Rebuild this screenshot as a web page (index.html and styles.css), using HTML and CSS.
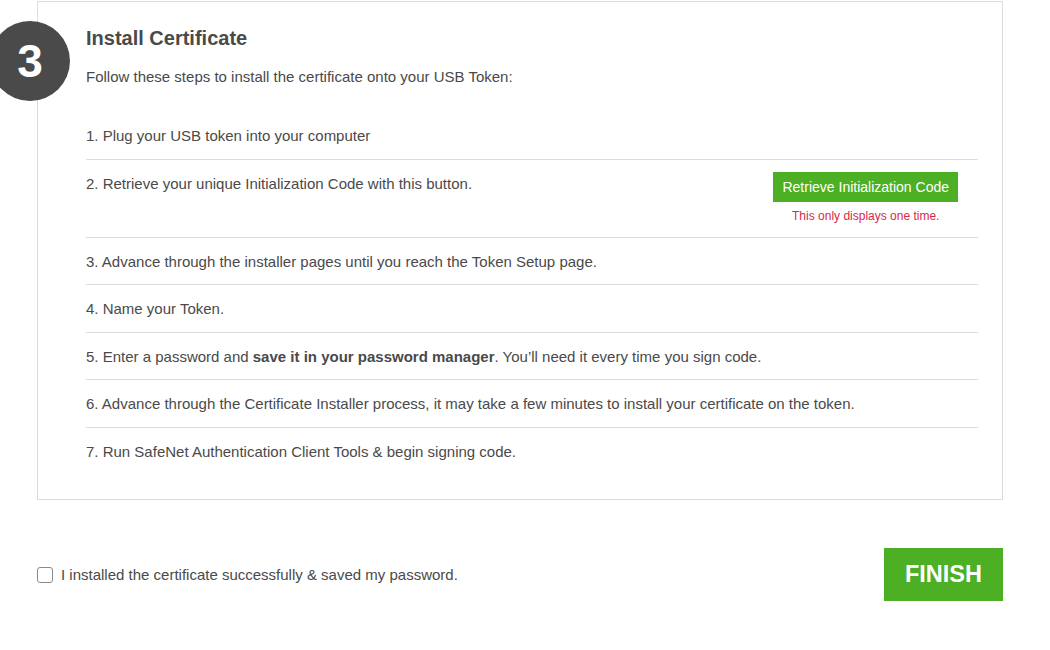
FILE: index.html
```html
<!DOCTYPE html>
<html>
<head>
<meta charset="utf-8">
<link rel="stylesheet" href="styles.css">
</head>
<body>
<div class="page">
  <section class="card">
    <div class="step-badge">3</div>
    <h2 class="title">Install Certificate</h2>
    <p class="intro">Follow these steps to install the certificate onto your USB Token:</p>
    <ul class="steps">
      <li class="step">1. Plug your USB token into your computer</li>
      <li class="step step-action">
        <span>2. Retrieve your unique Initialization Code with this button.</span>
        <div class="action">
          <button class="btn-retrieve">Retrieve Initialization Code</button>
          <span class="note">This only displays one time.</span>
        </div>
      </li>
      <li class="step">3. Advance through the installer pages until you reach the Token Setup page.</li>
      <li class="step">4. Name your Token.</li>
      <li class="step">5. Enter a password and <strong>save it in your password manager</strong>. You’ll need it every time you sign code.</li>
      <li class="step">6. Advance through the Certificate Installer process, it may take a few minutes to install your certificate on the token.</li>
      <li class="step">7. Run SafeNet Authentication Client Tools &amp; begin signing code.</li>
    </ul>
  </section>
  <div class="footer">
    <label class="confirm">
      <span class="box"></span>
      <span>I installed the certificate successfully &amp; saved my password.</span>
    </label>
    <button class="btn-finish">FINISH</button>
  </div>
</div>
</body>
</html>
```

FILE: styles.css
```css
html, body {
  margin: 0;
  padding: 0;
  background: #fff;
}
body {
  font-family: "Liberation Sans", Arial, sans-serif;
  color: #4a4a4a;
  overflow: hidden;
}
.page {
  width: 966px;
  margin: 1px 0 0 37px;
}
.card {
  position: relative;
  border: 1px solid #dcdcdc;
  padding: 23px 24px 25px 48px;
}
.step-badge {
  position: absolute;
  left: -48px;
  top: 19px;
  width: 80px;
  height: 80px;
  border-radius: 50%;
  background: #4a4a4a;
  color: #fff;
  font-weight: bold;
  font-size: 46px;
  line-height: 80px;
  text-align: center;
}
.title {
  margin: 0;
  font-size: 20px;
  line-height: 26px;
  font-weight: bold;
  color: #4a4a4a;
}
.intro {
  margin: 16px 0 0;
  font-size: 15px;
  line-height: 20px;
}
.steps {
  list-style: none;
  margin: 25px 0 0;
  padding: 0;
}
.step {
  font-size: 15px;
  line-height: 20px;
  padding: 14px 0 12.5px;
  border-bottom: 1px solid #dcdcdc;
}
.step:last-child {
  border-bottom: none;
}
.step-action {
  display: flex;
  justify-content: space-between;
  align-items: flex-start;
  padding-bottom: 14px;
}
.action {
  display: flex;
  flex-direction: column;
  align-items: center;
  margin: -2px 20px 0 0;
}
.btn-retrieve {
  background: #4caf24;
  color: #fff;
  border: none;
  font-family: "Liberation Sans", Arial, sans-serif;
  font-size: 14px;
  height: 30px;
  padding: 0 9px;
  cursor: pointer;
}
.note {
  margin-top: 7px;
  font-size: 12px;
  line-height: 14px;
  color: #d9274a;
}
.footer {
  display: flex;
  justify-content: space-between;
  align-items: center;
  margin-top: 48px;
}
.confirm {
  display: flex;
  align-items: center;
  gap: 8px;
  font-size: 15px;
}
.box {
  width: 14px;
  height: 14px;
  border: 1px solid #8a8a8a;
  border-radius: 3px;
  background: #fff;
}
.btn-finish {
  background: #4caf24;
  color: #fff;
  border: none;
  font-family: "Liberation Sans", Arial, sans-serif;
  font-weight: bold;
  font-size: 23.5px;
  width: 119px;
  height: 53px;
  cursor: pointer;
}
```
